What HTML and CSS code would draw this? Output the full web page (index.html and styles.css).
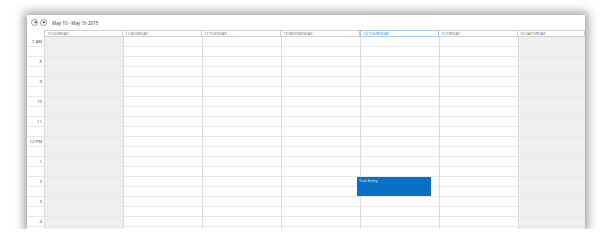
FILE: index.html
```html
<!DOCTYPE html>
<html lang="en">
<head>
  <meta charset="UTF-8">
  <title>Week View</title>
  <link rel="stylesheet" href="styles.css">
</head>
<body>

  <div class="panel">
    <div class="toolbar">
      <span class="nav-btn">&#9664;</span>
      <span class="nav-btn">&#9654;</span>
      <span class="range">May 10 - May 16 2015</span>
    </div>

    <div class="week-head">
      <div class="gutter-head"></div>
      <div class="day-head">10 SUNDAY</div>
      <div class="day-head">11 MONDAY</div>
      <div class="day-head">12 TUESDAY</div>
      <div class="day-head">13 WEDNESDAY</div>
      <div class="day-head today">14 THURSDAY</div>
      <div class="day-head">15 FRIDAY</div>
      <div class="day-head">16 SATURDAY</div>
    </div>

    <div class="week-body">
      <div class="gutter">
        <div class="hour">7 AM</div>
        <div class="hour">8</div>
        <div class="hour">9</div>
        <div class="hour">10</div>
        <div class="hour">11</div>
        <div class="hour">12 PM</div>
        <div class="hour">1</div>
        <div class="hour">2</div>
        <div class="hour">3</div>
        <div class="hour">4</div>
      </div>
      <div class="day weekend"></div>
      <div class="day"></div>
      <div class="day"></div>
      <div class="day"></div>
      <div class="day">
        <div class="event">Test Entry</div>
      </div>
      <div class="day"></div>
      <div class="day weekend"></div>
    </div>
  </div>

</body>
</html>
```

FILE: styles.css
```css
body {
  margin: 0;
  background: #fff;
  font-family: "Open Sans", "Noto Sans", sans-serif;
}
.panel {
  margin: 15px 0 0 27px;
  width: 558px;
  height: 214px;
  background: #fff;
  overflow: hidden;
  box-shadow: 0 0 9px 3px rgba(0, 0, 0, 0.38);
}
.toolbar {
  height: 15px;
  display: flex;
  align-items: center;
  padding-left: 4px;
  gap: 2px;
}
.nav-btn {
  width: 5px;
  height: 5px;
  border: 1px solid #999;
  border-radius: 50%;
  font-size: 3px;
  line-height: 5px;
  text-align: center;
  color: #333;
}
.range {
  margin-left: 3px;
  font-size: 4.6px;
  color: #333;
}
.week-head,
.week-body {
  display: grid;
  grid-template-columns: 17px repeat(6, 79px) 1fr;
}
.day-head {
  height: 5px;
  border: 1px solid #cfcfcf;
  border-left: none;
  font-size: 4px;
  line-height: 5px;
  padding-left: 2px;
  color: #666;
  white-space: nowrap;
  overflow: hidden;
}
.day-head:nth-child(2) {
  border-left: 1px solid #cfcfcf;
}
.day-head.today {
  color: #2a7fd4;
  border: 1px solid #a8c8ee;
}
.week-body {
  height: 193px;
}
.gutter,
.day {
  background-image: repeating-linear-gradient(to bottom, transparent 0 9px, #e9e9e9 9px 10px);
}
.day {
  position: relative;
  border-left: 1px solid #dcdcdc;
}
.day.weekend {
  background-color: #efefef;
}
.hour {
  height: 20px;
  box-sizing: border-box;
  padding: 2px 2px 0 0;
  font-size: 4.3px;
  line-height: 5px;
  text-align: right;
  color: #444;
}
.event {
  position: absolute;
  left: -4px;
  top: 140px;
  width: 74px;
  height: 19px;
  background: #0a70c6;
  color: #fff;
  font-size: 4px;
  line-height: 5px;
  padding: 1px 2px;
  box-sizing: border-box;
}
```
